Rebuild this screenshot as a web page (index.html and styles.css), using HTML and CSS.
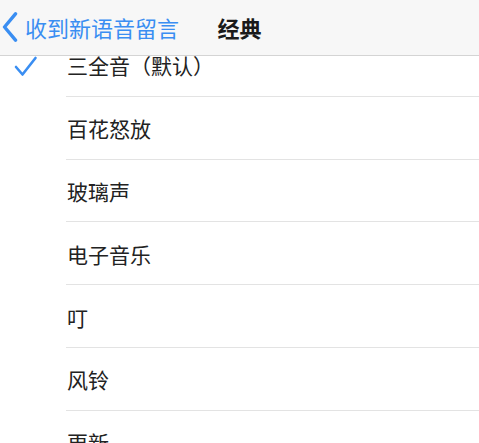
FILE: index.html
```html
<!DOCTYPE html>
<html lang="zh-CN">
<head>
    <meta charset="UTF-8">
    <meta name="viewport" content="width=device-width, initial-scale=1.0">
    <title>经典</title>
    <link rel="stylesheet" href="styles.css">
</head>
<body>
    <div class="navbar">
        <div class="back">
            <svg class="chevron" width="16" height="30" viewBox="0 0 16 30">
                <path d="M13.5 1.8 L2.5 15 L13.5 28.2" fill="none" stroke="#3a8ef2" stroke-width="3.4" stroke-linecap="round" stroke-linejoin="round"/>
            </svg>
            <span>收到新语音留言</span>
        </div>
        <div class="title">经典</div>
        <div></div>
    </div>

    <div class="list">
        <div class="row">
            <div class="check">
                <svg width="24" height="22" viewBox="0 0 24 22">
                    <path d="M2 11 L8.5 18.5 L21.5 2" fill="none" stroke="#3a8ef2" stroke-width="2.6" stroke-linecap="round" stroke-linejoin="round"/>
                </svg>
            </div>
            <div class="label">三全音（默认）</div>
        </div>
        <div class="row">
            <div class="check"></div>
            <div class="label">百花怒放</div>
        </div>
        <div class="row">
            <div class="check"></div>
            <div class="label">玻璃声</div>
        </div>
        <div class="row">
            <div class="check"></div>
            <div class="label">电子音乐</div>
        </div>
        <div class="row">
            <div class="check"></div>
            <div class="label">叮</div>
        </div>
        <div class="row">
            <div class="check"></div>
            <div class="label">风铃</div>
        </div>
        <div class="row">
            <div class="check"></div>
            <div class="label">更新</div>
        </div>
    </div>
</body>
</html>
```

FILE: styles.css
```css
body {
    margin: 0;
    padding: 0;
    background-color: #ffffff;
    font-family: "Noto Sans CJK SC", "Noto Sans", sans-serif;
    height: 443px;
    overflow: hidden;
    position: relative;
}
.navbar {
    position: absolute;
    top: 0;
    left: 0;
    right: 0;
    height: 56px;
    box-sizing: border-box;
    background-color: #f7f7f7;
    border-bottom: 1px solid #d4d4d4;
    display: grid;
    grid-template-columns: 1fr auto 1fr;
    align-items: center;
    z-index: 2;
}
.back {
    display: flex;
    align-items: center;
    color: #3a8ef2;
    font-size: 22px;
    padding-left: 2px;
    margin-top: -1px;
}
.chevron {
    margin-right: 7px;
}
.title {
    font-size: 22px;
    font-weight: bold;
    color: #1a1a1a;
    margin-top: -1px;
}
.list {
    padding-top: 34px;
}
.row {
    display: flex;
    height: 62.8px;
}
.check {
    width: 66px;
    display: flex;
    align-items: center;
    justify-content: center;
    padding-right: 14px;
    box-sizing: border-box;
    padding-top: 3px;
}
.label {
    flex: 1;
    display: flex;
    align-items: center;
    padding-left: 1px;
    font-size: 21px;
    color: #222222;
    border-bottom: 1px solid #e3e3e3;
    padding-top: 1px;
}
```
